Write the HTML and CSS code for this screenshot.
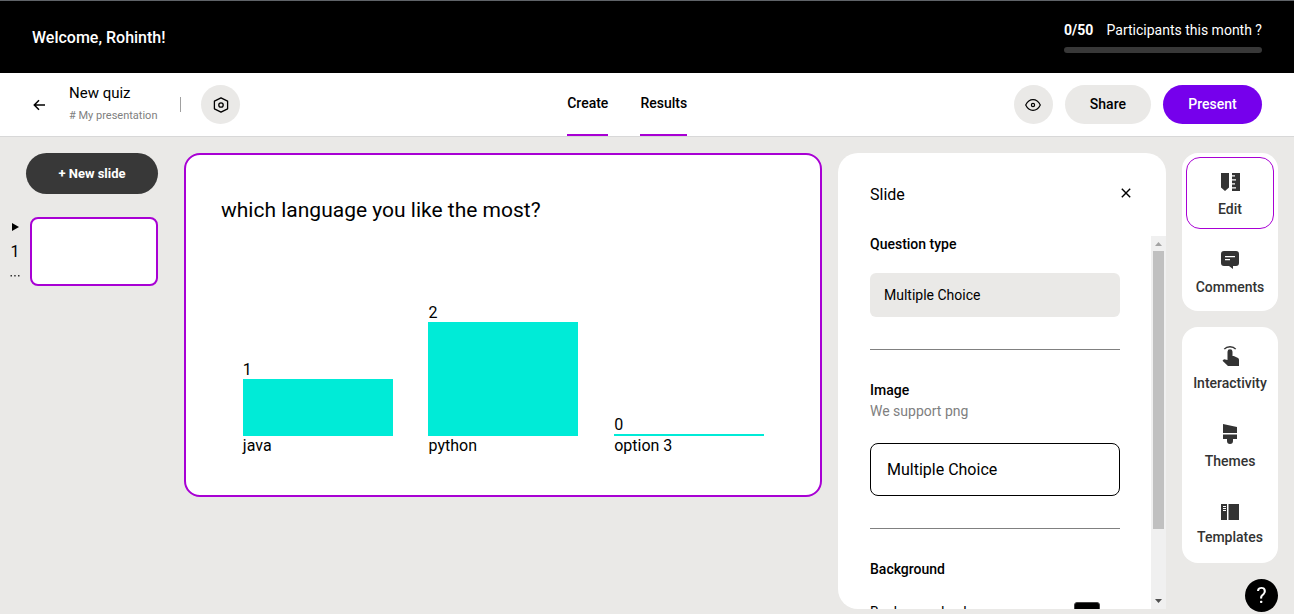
FILE: index.html
```html
<!DOCTYPE html>
<html lang="en">
<head>
<meta charset="utf-8">
<meta name="viewport" content="width=device-width, initial-scale=1">
<title>New quiz</title>
<link rel="stylesheet" href="styles.css">
</head>
<body>
<header class="topbar">
  <p class="welcome">Welcome, Rohinth!</p>
  <div class="usage">
    <p class="usage-text"><strong>0/50</strong><span>Participants this month ?</span></p>
    <div class="usage-bar"></div>
  </div>
</header>

<nav class="toolbar">
  <div class="toolbar-left">
    <button class="back" aria-label="Back">
      <svg width="14" height="12" viewBox="0 0 14 12" fill="none" stroke="currentColor" stroke-width="1.5"><path d="M13 6H2.500M7 1.300 2.300 6 7 10.700"/></svg>
    </button>
    <div class="doc">
      <h1 class="doc-title">New quiz</h1>
      <p class="doc-path"># My presentation</p>
    </div>
    <span class="divider"></span>
    <button class="round" aria-label="Settings">
      <svg width="16" height="16" viewBox="0 0 16 16" fill="none" stroke="currentColor" stroke-width="1.3"><path d="M8 .8 14.600 4.200v7.600L8 15.200 1.400 11.800V4.200z" stroke-linejoin="round"/><circle cx="8" cy="8" r="2.2"/></svg>
    </button>
  </div>
  <div class="tabs">
    <a class="tab" href="#create">Create</a>
    <a class="tab" href="#results">Results</a>
  </div>
  <div class="toolbar-right">
    <button class="round" aria-label="Preview">
      <svg width="16" height="16" viewBox="0 0 16 16" fill="none" stroke="currentColor" stroke-width="1.2"><path d="M.7 8C2.3 4.700 4.900 2.700 8 2.700S13.700 4.700 15.300 8C13.700 11.300 11.100 13.300 8 13.300S2.300 11.300.7 8z" stroke-linejoin="round"/><circle cx="8" cy="8" r="1.6"/></svg>
    </button>
    <button class="pill">Share</button>
    <button class="pill pill-primary">Present</button>
  </div>
</nav>

<main class="workspace">
  <aside class="slides">
    <button class="new-slide">+ New slide</button>
    <div class="slide-row">
      <div class="slide-meta">
        <svg width="8" height="8" viewBox="0 0 8 8" fill="currentColor"><path d="M1 0v8l7-4z"/></svg>
        <span class="slide-number">1</span>
        <svg width="10" height="2" viewBox="0 0 10 2" fill="#333"><path d="M.5 0H2v1.500H.5zM4.200 0h1.500v1.500H4.200zM8 0h1.500v1.500H8z"/></svg>
      </div>
      <button class="thumb" aria-label="Slide 1"></button>
    </div>
  </aside>

  <section class="slide">
    <h2 class="question">which language you like the most?</h2>
    <div class="chart">
      <div class="column"><span>1</span><div class="bar" style="height:57px"></div><span>java</span></div>
      <div class="column"><span>2</span><div class="bar" style="height:114px"></div><span>python</span></div>
      <div class="column"><span>0</span><div class="bar" style="height:2px"></div><span>option 3</span></div>
    </div>
  </section>

  <section class="panel">
    <div class="panel-head">
      <h2 class="panel-title">Slide</h2>
      <button class="close" aria-label="Close">
        <svg width="10" height="10" viewBox="0 0 10 10" fill="none" stroke="currentColor" stroke-width="1.4"><path d="m.8.8 8.400 8.400M9.200.8.800 9.200"/></svg>
      </button>
    </div>
    <div class="panel-body">
      <div class="fields">
        <div class="field">
          <label class="label" for="type">Question type</label>
          <select class="type-select" id="type"><option>Multiple Choice</option></select>
        </div>
        <div class="field">
          <label class="label" for="image">Image</label>
          <p class="hint">We support png</p>
          <input class="image-input" id="image" type="text" value="Multiple Choice">
        </div>
        <div class="field">
          <p class="label">Background</p>
          <div class="color-row">
            <label for="color">Background color</label>
            <button class="swatch" id="color" aria-label="Background color"></button>
          </div>
        </div>
      </div>
      <div class="scrollbar">
        <svg width="7" height="4" viewBox="0 0 7 4" fill="#a3a3a3"><path d="M0 4 3.500 0 7 4z"/></svg>
        <div class="scroll-track"><div class="scroll-thumb"></div></div>
        <svg width="7" height="4" viewBox="0 0 7 4" fill="#505050"><path d="M0 0 3.500 4 7 0z"/></svg>
      </div>
    </div>
  </section>

  <aside class="rail">
    <div class="rail-card">
      <button class="tool tool-active">
        <svg width="20" height="20" viewBox="0 0 20 20"><path fill="currentColor" d="M1 1h8v14.500L5 19l-4-3.500zM12 1h8v18h-8v-2.500h4v-1.200h-4v-2.800h3v-1.200h-3V8.500h4V7.300h-4V4.500h3V3.300h-3z"/></svg>
        Edit
      </button>
      <button class="tool">
        <svg width="20" height="20" viewBox="0 0 20 20"><path fill="currentColor" d="M4 1h12a3 3 0 0 1 3 3v9a3 3 0 0 1-3 3h-3v3l-4-3H4a3 3 0 0 1-3-3V4a3 3 0 0 1 3-3z"/><path stroke="#fff" stroke-width="1.300" d="M5 6.700h10M5 9.700h5"/></svg>
        Comments
      </button>
    </div>
    <div class="rail-card">
      <button class="tool">
        <svg width="20" height="20" viewBox="0 1 20 21" preserveAspectRatio="none"><path fill="none" stroke="currentColor" stroke-width="1.500" d="M4.300 4.300C7 1 13 1 15.700 4.300"/><path fill="currentColor" d="M7.500 7a2.500 2.500 0 0 1 5 0v4.500h1.300l4.200 2q1 .5 1 2V22H8l-5.500-5.500L4 15l3.500.6z"/></svg>
        Interactivity
      </button>
      <button class="tool">
        <svg width="16" height="20" viewBox="0 0 16 20"><path fill="currentColor" d="M1 0 15 3v6H1zM1 10.500h14V15h-4v2a3 3 0 0 1-6 0v-2H1z"/></svg>
        Themes
      </button>
      <button class="tool">
        <svg width="18" height="16" viewBox="0 0 18 16"><path fill="currentColor" d="M0 0h6v16H0zM7.500 0H18v16H7.500z"/><path stroke="#fff" d="M2 2.500h3M2 4.500h3M2 6.500h3"/></svg>
        Templates
      </button>
    </div>
  </aside>
</main>
<button class="help" aria-label="Help">?</button>
</body>
</html>
```
FILE: styles.css
```css
* { box-sizing: border-box; }

body {
  margin: 0;
  height: 100vh;
  display: flex;
  flex-direction: column;
  overflow: hidden;
  background: #eae9e7;
  color: #000;
  font-family: Roboto, "Liberation Sans", sans-serif;
  font-size: 14px;
  line-height: 20px;
}

h1, h2, p { margin: 0; font-weight: 400; }

button, input, select { font: inherit; color: inherit; }

button {
  display: flex;
  align-items: center;
  justify-content: center;
  padding: 0;
  border: 0;
  background: none;
  cursor: pointer;
}

.topbar {
  flex: none;
  display: flex;
  align-items: center;
  justify-content: space-between;
  height: 73px;
  padding: 0 32px;
  border-top: 1px solid #5f6368;
  background: #000;
  color: #fff;
}

.welcome { padding-top: 2px; font-size: 16px; font-weight: 500; }

.usage { min-width: 198px; padding-bottom: 2px; }
.usage-text { display: flex; justify-content: space-between; gap: 8px; }
.usage-text strong { font-weight: 700; }
.usage-bar { height: 6px; margin: 7px 0 0; border-radius: 3px; background: #383838; }

.toolbar {
  flex: none;
  display: flex;
  align-items: stretch;
  justify-content: space-between;
  height: 64px;
  padding: 0 32px;
  border-bottom: 1px solid #d8d8d8;
  background: #fff;
}

.toolbar-left, .toolbar-right { display: flex; align-items: center; }
.toolbar-right { gap: 12px; }
.back { margin-right: 23px; }
.doc { padding-bottom: 1px; }
.doc-title { font-size: 15px; line-height: 24px; }
.doc-path { color: #808080; font-size: 11px; line-height: 22px; }
.divider { width: 1px; height: 15px; margin: 0 20px 0 23px; background: #a0a0a0; }
.round { width: 39px; height: 39px; border-radius: 50%; background: #eae9e7; }

.tabs { display: flex; gap: 32px; }
.tab {
  padding-top: 20px;
  border-bottom: 2px solid #a800d4;
  color: #000;
  font-weight: 500;
  text-decoration: none;
}

.pill {
  height: 39px;
  padding: 0 25px 2px;
  border-radius: 20px;
  background: #eae9e7;
  font-weight: 500;
}
.pill-primary { min-width: 99px; background: #7600ec; color: #fff; }

.workspace {
  flex: 1;
  min-height: 0;
  display: flex;
  align-items: flex-start;
  gap: 16px;
  padding: 16px 16px 5px 10px;
}

.slides { width: 158px; padding-right: 10px; }
.new-slide {
  width: 132px;
  height: 41px;
  margin-left: 16px;
  border-radius: 21px;
  background: #383838;
  color: #fff;
  font-size: 13px;
  font-weight: 700;
}
.slide-row { display: flex; gap: 10px; margin-top: 23px; }
.slide-meta {
  width: 10px;
  display: flex;
  flex-direction: column;
  align-items: center;
  padding-top: 6px;
}
.slide-number { margin: 11px 0 13px; font-size: 16px; }
.thumb {
  flex: 1;
  height: 69px;
  border: 2px solid #a800d4;
  border-radius: 8px;
  background: #fff;
}

.slide {
  flex: 1;
  min-width: 0;
  padding: 43px 35px 40px;
  border: 2px solid #a800d4;
  border-radius: 16px;
  background: #fff;
}
.question { font-size: 21px; line-height: 24px; }
.chart {
  display: flex;
  align-items: flex-end;
  justify-content: space-around;
  height: 233px;
  padding: 0 3px 0 4px;
  font-size: 16px;
}
.column { width: 150px; }
.column span { display: block; line-height: 19px; }
.bar { background: #00ebd7; }

.panel {
  align-self: stretch;
  width: 328px;
  display: flex;
  flex-direction: column;
  overflow: hidden;
  border-radius: 20px 20px 0 20px;
  background: #fff;
}
.panel-head {
  flex: none;
  display: flex;
  align-items: center;
  justify-content: space-between;
  height: 83px;
  padding: 0 35px 0 32px;
}
.panel-title { font-size: 16px; }
.close { padding-bottom: 4px; }
.panel-body { flex: 1; min-height: 0; display: flex; }
.fields { flex: 1; overflow: hidden; padding: 0 31px 0 32px; }
.field { padding-bottom: 32px; margin-bottom: 30px; border-bottom: 1px solid #808080; }
.label { display: block; line-height: 20px; font-weight: 500; }
.field:first-child .label { line-height: 16px; }
.hint { color: #808080; line-height: 22px; }
.type-select {
  appearance: none;
  display: block;
  width: 100%;
  height: 44px;
  margin-top: 21px;
  padding: 0 14px;
  border: 0;
  border-radius: 6px;
  background: #eae9e7;
}
.image-input {
  display: block;
  width: 100%;
  height: 53px;
  margin-top: 21px;
  padding: 0 16px;
  border: 1px solid #000;
  border-radius: 8px;
  background: #fff;
  font-size: 16px;
}
.color-row { display: flex; justify-content: space-between; padding: 23px 20px 0 0; line-height: 20px; }
.swatch { width: 26px; height: 26px; border: 1px solid #444; border-radius: 3px; background: #000; }

.scrollbar {
  width: 15px;
  display: flex;
  flex-direction: column;
  align-items: center;
  justify-content: space-between;
  padding: 6px 0;
  background: #f0f0f0;
}
.scroll-track { flex: 1; width: 11px; padding: 5px 0; }
.scroll-thumb { height: 81%; background: #c0c0c0; }

.rail { width: 96px; display: flex; flex-direction: column; gap: 16px; }
.rail-card {
  display: flex;
  flex-direction: column;
  gap: 6px;
  padding: 4px;
  border-radius: 16px;
  background: #fff;
}
.tool {
  flex-direction: column;
  gap: 7px;
  height: 72px;
  padding-top: 4px;
  border: 1px solid transparent;
  border-radius: 14px;
  color: #333;
  font-weight: 500;
}
.tool-active { border-color: #a800d4; }

.help {
  position: fixed;
  right: 16px;
  bottom: 2px;
  width: 33px;
  height: 33px;
  border-radius: 50%;
  background: #000;
  color: #fff;
  font-size: 22px;
}
```
